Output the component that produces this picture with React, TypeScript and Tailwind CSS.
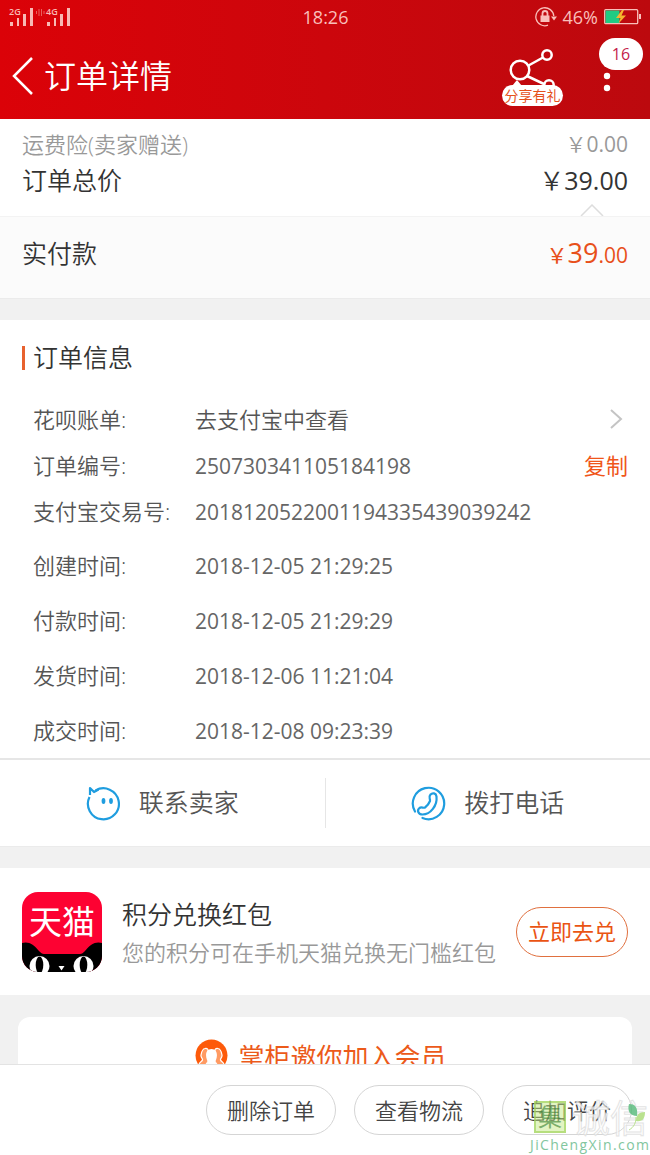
import clsx from "clsx"

type Row = {
  label: string
  value: string
  action?: "link" | "copy"
}

const idRows: Row[] = [
  { label: "花呗账单:", value: "去支付宝中查看", action: "link" },
  { label: "订单编号:", value: "250730341105184198", action: "copy" },
  { label: "支付宝交易号:", value: "2018120522001194335439039242" },
]

const timeRows: Row[] = [
  { label: "创建时间:", value: "2018-12-05 21:29:25" },
  { label: "付款时间:", value: "2018-12-05 21:29:29" },
  { label: "发货时间:", value: "2018-12-06 11:21:04" },
  { label: "成交时间:", value: "2018-12-08 09:23:39" },
]

const footerActions = ["删除订单", "查看物流", "追加评价"]

const Signal = ({ label }: { label: string }) => (
  <svg width="26" height="20" viewBox="0 0 26 20" fill="#f8b9b4" className="overflow-visible">
    <text x="0" y="8" fontSize="9" fontWeight="600">
      {label}
    </text>
    <rect x="1" y="15" width="3" height="4" />
    <rect x="8" y="11" width="2" height="8" />
    <rect x="14" y="7" width="3" height="12" />
    <rect x="21" y="1" width="3" height="18" />
  </svg>
)

const StatusBar = () => (
  <div className="grid h-[33px] grid-cols-3 items-center pr-2 pl-[9px] text-lg font-normal text-[#f9bfba]">
    <div className="flex items-center">
      <Signal label="2G" />
      <svg width="11" height="20" viewBox="0 0 11 20" fill="none" stroke="#e8605c">
        <path d="M1.500 4v3M4 2v7M6.500 2v7M9 4v3" />
      </svg>
      <Signal label="4G" />
    </div>
    <span className="text-center">18:26</span>
    <div className="flex items-center justify-end">
      <svg width="22" height="20" viewBox="0 0 22 20" fill="none" stroke="#f9bfba" strokeWidth="1.300">
        <path d="M13 18.200A9 9 0 1 1 18.800 9" />
        <path d="M16 9.500h6l-3 4z" fill="#f9bfba" stroke="none" />
        <rect x="5.500" y="8.500" width="9" height="6.500" fill="#f9bfba" stroke="none" />
        <path d="M7.500 9V6.500a2.500 2.500 0 0 1 5 0V9" strokeWidth="1.800" />
      </svg>
      <span className="mr-1.5 ml-1.5">46%</span>
      <svg width="38" height="16" viewBox="0 0 38 16">
        <rect x="0.700" y="0.700" width="33" height="14" rx="1" fill="none" stroke="#f9bfba" strokeWidth="1.300" />
        <rect x="1.500" y="1.500" width="14" height="12.500" fill="#1fcb83" />
        <rect x="35" y="5" width="2" height="5" fill="#f9bfba" />
        <path d="M18 1 12 9h4.500l-2 5.500 7.500-8h-4.500l2.500-5.500z" fill="#f5b52e" />
      </svg>
    </div>
  </div>
)

const Header = () => (
  <header className="shrink-0 bg-linear-to-r from-[#db0208] via-[#cc060c] to-[#bc090e] text-white">
    <StatusBar />
    <div className="flex h-[86px] items-start pr-[7px] pl-3">
      <button type="button" aria-label="返回" className="flex h-full items-center">
        <svg width="22" height="40" viewBox="0 0 22 40" fill="none" stroke="currentColor" strokeWidth="2.500">
          <path d="M20 2 2 20l18 18" />
        </svg>
      </button>
      <h1 className="ml-2.5 flex-1 self-center text-[32px] leading-10">订单详情</h1>

      <button type="button" className="relative mt-4 mr-9 flex h-[57px] w-[61px] flex-col justify-end">
        <svg
          width="61"
          height="45"
          viewBox="0 0 61 45"
          fill="none"
          stroke="currentColor"
          strokeWidth="2.500"
          className="absolute top-0 left-0"
        >
          <circle cx="18" cy="21" r="9.300" />
          <circle cx="45" cy="6" r="4.700" />
          <circle cx="47" cy="36" r="4.700" />
          <path d="m26.500 16.500 14.500-8M25 27l18 8.500" />
          <path d="m10 37 5-6 5 6z" fill="currentColor" stroke="none" />
        </svg>
        <span className="relative w-full rounded-full bg-white text-center font-normal text-[14px] leading-[21px] text-[#e5511b]">
          分享有礼
        </span>
      </button>

      <button type="button" aria-label="更多" className="relative mt-[5px] h-14 w-11">
        <svg width="16" height="56" viewBox="0 0 16 56" fill="currentColor">
          <circle cx="8" cy="26" r="3.200" />
          <circle cx="8" cy="38" r="3.200" />
          <circle cx="8" cy="50" r="3.200" />
        </svg>
        <span className="absolute top-0 left-0 w-full rounded-full bg-white text-center font-normal text-base leading-8 text-[#c4214a]">
          16
        </span>
      </button>
    </div>
  </header>
)

const Totals = () => (
  <section>
    <div className="px-[22px] pt-[7px] text-[25px] leading-9 text-[#333]">
      <div className="flex justify-between text-[22px] text-[#999]">
        <span>运费险(卖家赠送)</span>
        <span className="text-[21px]">
          ￥<span className="font-normal">0.00</span>
        </span>
      </div>
      <div className="flex justify-between">
        <span>订单总价</span>
        <span>
          ￥<span className="font-normal">39.00</span>
        </span>
      </div>
      <div className="flex h-[18px] items-end justify-end pr-6">
        <svg width="24" height="12" viewBox="0 0 24 12" fill="none" stroke="#ddd" strokeWidth="1.500">
          <path d="M1 12 12 1l11 11" />
        </svg>
      </div>
    </div>
    <div className="flex h-[82px] items-center justify-between border-t border-[#f3f3f3] bg-[#fbfbfb] px-[22px] pb-2 text-[25px] text-[#333]">
      <span>实付款</span>
      <span className="font-normal text-[21px] text-[#e8501a]">
        ￥<span className="text-[27px]">39</span>.00
      </span>
    </div>
  </section>
)

const InfoRow = ({ row, tall }: { row: Row; tall?: boolean }) => (
  <div className={clsx("flex items-baseline", tall ? "h-[55px] leading-[55px]" : "h-[46px] leading-[46px]")}>
    <dt className="w-[162px] shrink-0">{row.label}</dt>
    <dd className="flex flex-1 items-baseline justify-between">
      {row.action === "link" ? (
        <a href="#bill" className="flex flex-1 items-center justify-between">
          {row.value}
          <svg width="18" height="22" viewBox="0 0 18 22" fill="none" stroke="#c4c4c4" strokeWidth="2">
            <path d="m1 2 10 9-10 9" />
          </svg>
        </a>
      ) : (
        <span className="font-normal text-[21px] text-[#666]">{row.value}</span>
      )}
      {row.action === "copy" && (
        <button type="button" className="font-normal text-[#f0561a]">
          复制
        </button>
      )}
    </dd>
  </div>
)

const OrderInfo = () => (
  <section className="pt-5">
    <div className="flex h-9 items-center gap-2 px-[22px]">
      <span className="h-6 w-[3px] bg-[#e8622f]" />
      <h2 className="text-[25px] text-[#333]">订单信息</h2>
    </div>
    <dl className="mt-5 pr-[22px] pl-[33px] text-[22px] text-[#555]">
      {idRows.map((row) => (
        <InfoRow key={row.label} row={row} />
      ))}
      <div className="mt-1">
        {timeRows.map((row) => (
          <InfoRow key={row.label} row={row} tall />
        ))}
      </div>
    </dl>
  </section>
)

const Contact = () => (
  <section className="flex h-[88px] items-center border-t-2 border-[#e6e6e6] text-[25px] text-[#555]">
    <button type="button" className="flex flex-1 items-center justify-center gap-[18px]">
      <svg width="35" height="35" viewBox="0 0 35 35" fill="none" stroke="#1f9ddf" strokeWidth="2.200">
        <path d="M9.500 4.500A15.500 15.500 0 1 1 3.500 11" />
        <path d="M4 9V2l4 4 4.500-2.500" strokeLinejoin="round" />
        <ellipse cx="17.500" cy="15" rx="1.900" ry="3" fill="#1f9ddf" stroke="none" />
        <ellipse cx="25" cy="15" rx="1.900" ry="3" fill="#1f9ddf" stroke="none" />
      </svg>
      联系卖家
    </button>
    <span className="h-[50px] w-px bg-[#e6e6e6]" />
    <button type="button" className="flex flex-1 items-center justify-center gap-[18px]">
      <svg width="35" height="35" viewBox="0 0 35 35" fill="none" stroke="#1f9ddf" strokeWidth="2.200" strokeLinecap="round">
        <path d="M4 25.500A15.700 15.700 0 1 1 11.500 32" />
        <path
          d="M19.500 8.500c2-2 5.500-1.500 6 2 1 9-6 18-14 18-4 0-6-4-3-6.500 2-1.500 4 .5 5.500-.5 2-1.500 4-4 5-6.500.5-2.500-2-3.500.5-6.500z"
          strokeLinejoin="round"
        />
      </svg>
      拨打电话
    </button>
  </section>
)

const TmallLogo = () => (
  <div className="flex size-20 shrink-0 flex-col items-center justify-between overflow-hidden rounded-2xl bg-[#fd0232]">
    <span className="mt-3 font-normal text-[33px] leading-9 text-white">天猫</span>
    <svg width="80" height="31" viewBox="0 0 80 31">
      <path d="M0 31V2c6-2 12 1 17 8 2 2 3 3 5 3h36c2 0 3-1 5-3 5-7 11-10 17-8v29z" fill="#000" />
      <circle cx="17.500" cy="25" r="10" fill="#fff" />
      <circle cx="61.500" cy="25" r="10" fill="#fff" />
      <ellipse cx="17.500" cy="24" rx="3.800" ry="8.500" fill="#000" />
      <ellipse cx="61.500" cy="24" rx="3.800" ry="8.500" fill="#000" />
      <path d="M36.500 25h6l-3 4.500z" fill="#fff" />
    </svg>
  </div>
)

const Promo = () => (
  <section className="flex h-[127px] items-center gap-5 px-[22px]">
    <TmallLogo />
    <div className="flex-1 whitespace-nowrap">
      <h2 className="text-[25px] leading-10 text-[#333]">积分兑换红包</h2>
      <p className="text-[22px] leading-9 text-[#999]">您的积分可在手机天猫兑换无门槛红包</p>
    </div>
    <button
      type="button"
      className="h-[50px] w-28 shrink-0 rounded-full border border-[#e0703f] font-normal text-[22px] text-[#ea5413]"
    >
      立即去兑
    </button>
  </section>
)

const MemberCard = () => (
  <section className="mx-[18px] flex items-start justify-center gap-2.5 rounded-xl bg-white py-[22px] pr-2 text-[#ec5a1a]">
    <svg width="33" height="33" viewBox="0 0 33 33" fill="none">
      <circle cx="16.500" cy="16.500" r="16" fill="#fd5a0a" />
      <path
        d="M10 9.500c2.500-.5 3.500 1 3 3.500s-1 3 0 5 1.500 2 0 4.500l-2 3H4c0-2 3-3 3.500-4.500s-2-2.500-1.500-5 1-6 4-6.500z"
        fill="#ff9a62"
        stroke="#fff"
        strokeWidth="1.200"
      />
      <path
        d="M23 9.500c-2.500-.5-3.500 1-3 3.500s1 3 0 5-1.500 2 0 4.500l2 3h7c0-2-3-3-3.500-4.500s2-2.500 1.500-5-1-6-4-6.500z"
        fill="#ff9a62"
        stroke="#fff"
        strokeWidth="1.200"
      />
      <path d="M11 33v-8c2-1 2-2 1-4-2-5-1-11 4.500-11S23 16 21 21c-1 2-1 3 1 4v8z" fill="#fff" />
    </svg>
    <h2 className="font-normal text-[26px] leading-9">掌柜邀你加入会员</h2>
  </section>
)

const SiteMark = () => (
  <div className="pointer-events-none absolute right-0 bottom-0 w-[120px] opacity-80">
    <div className="flex h-9 items-center pl-1">
      <span className="flex size-8 items-center justify-center border-2 border-[#a5d65f] bg-[#c3ea84]/60 font-normal text-[24px] leading-none text-[#5b9a45]">
        集
      </span>
      <span className="ml-1.5 text-[38px] leading-9 text-white [-webkit-text-stroke:1px_#ddd]">诚信</span>
    </div>
    <svg width="20" height="28" viewBox="0 0 20 28" className="absolute top-1 right-1">
      <path d="M3 1c6 0 9 3 8 12C4 13 1 8 3 1z" fill="#52b877" />
      <path d="M19 9c0 7-3 10-9 9 0-6 3-9 9-9z" fill="#a9dc74" />
      <path d="M10 14c0 6-2 10-7 13" fill="none" stroke="#a9dc74" />
    </svg>
    <p className="text-center font-normal text-[14px] leading-5 tracking-widest text-[#63b887]">JiChengXin.com</p>
  </div>
)

const Gap = () => <div className="h-[22px] border-t border-[#ebebeb] bg-[#f1f1f1]" />

export default function App() {
  return (
    <div className="relative flex h-screen flex-col overflow-hidden bg-white font-['Open_Sans','Noto_Sans_CJK_SC',sans-serif] font-[350]">
      <Header />
      <main className="min-h-0 flex-1 overflow-y-auto [scrollbar-width:none]">
        <Totals />
        <Gap />
        <OrderInfo />
        <Contact />
        <Gap />
        <Promo />
        <div className="bg-[#f1f1f1] py-[22px]">
          <MemberCard />
        </div>
      </main>
      <footer className="flex h-[91px] shrink-0 items-center justify-end gap-[18px] border-t border-[#e3e3e3] bg-white px-[18px]">
        {footerActions.map((action) => (
          <button
            key={action}
            type="button"
            className="h-[50px] w-[130px] rounded-full border border-[#d5d5d5] text-[22px] text-[#444]"
          >
            {action}
          </button>
        ))}
      </footer>
      <SiteMark />
    </div>
  )
}
